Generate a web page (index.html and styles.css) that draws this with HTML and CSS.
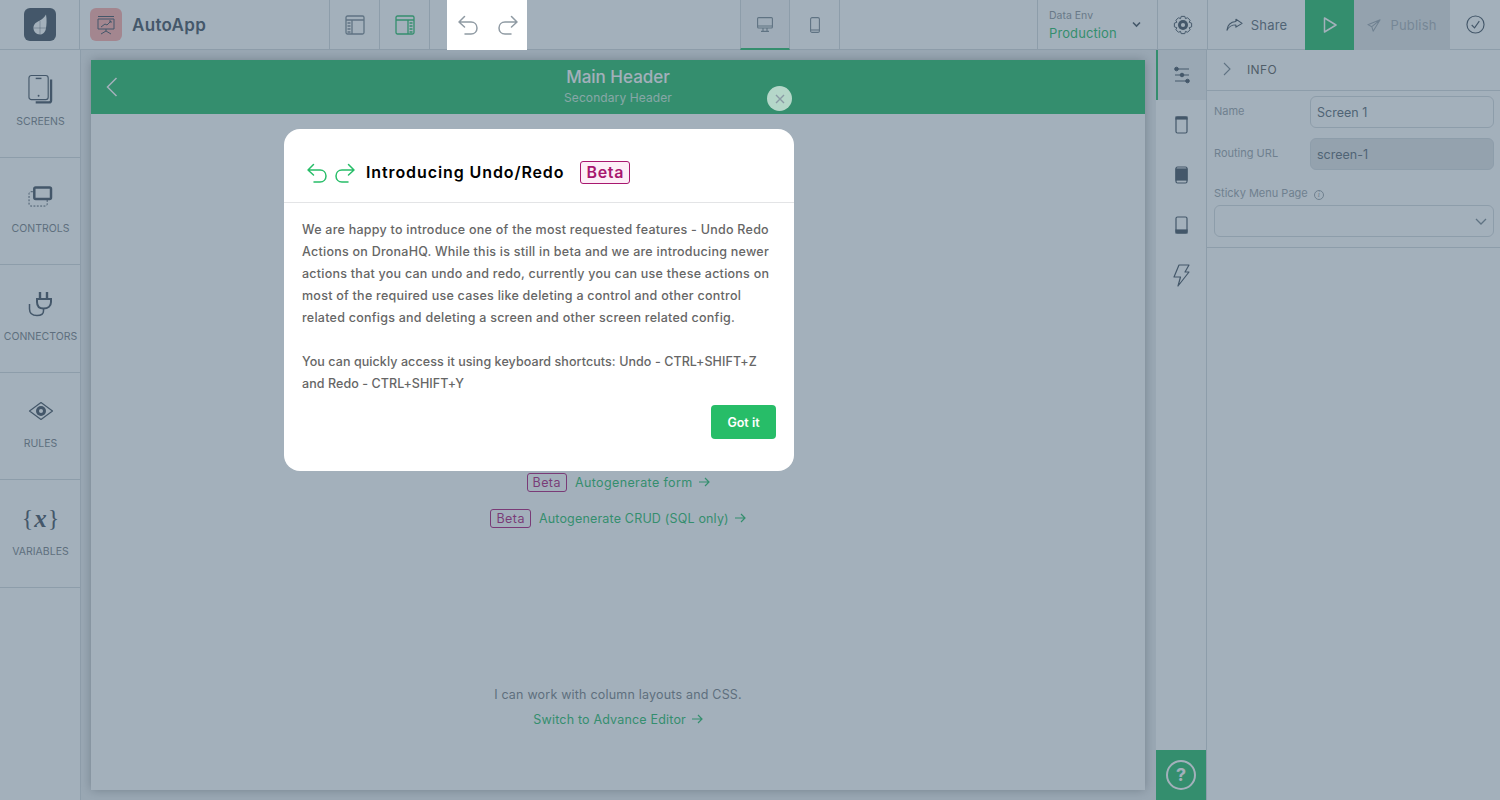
FILE: index.html
```html
<!DOCTYPE html>
<html lang="en">
<head>
    <meta charset="UTF-8">
    <title>AutoApp - Screen 1</title>
    <link rel="stylesheet" href="styles.css">
</head>
<body>
    <div id="app">
        <header class="topbar">
            <div class="cell logo-cell">
                <div class="logo">
                    <svg width="14" height="21" viewBox="0 0 14 21"><path d="M13 0.500 C14 6 13.500 11 13 14 C12.500 18 10 20.500 7 20.500 C3 20.500 0.500 17.500 0.500 14 C0.500 10 3 8.500 6 7 C9 5.500 11.500 3.500 13 0.500 Z" fill="#fff"/><path d="M7 7 V21 M1 14 H14" stroke="#455260" stroke-width=".8" stroke-opacity=".5"/></svg>
                </div>
            </div>
            <div class="cell app-cell">
                <div class="app-icon">
                    <svg width="22" height="22" viewBox="0 0 22 22" fill="none" stroke="#455260" stroke-width="1"><path d="M3 2.500 H19 M3 5 H19 V15 H3 Z M11 15 V17 M11 17 L6 20 M11 17 L16 20"/><path d="M6 13 L10 10 L12 11 L16 7 M14 7 H16 V9"/></svg>
                </div>
                <span class="app-name">AutoApp</span>
            </div>
            <div class="cell icon-cell">
                <svg width="20" height="20" viewBox="0 0 20 20" fill="none" stroke="#7b8791" stroke-width="1.300"><rect x="1" y="1" width="18" height="18" rx="1.500"/><path d="M1 5 H19 M7 5 V19 M2.500 8 H5.500 M2.500 11 H5.500 M2.500 14 H5.500 M2.500 17 H5.500"/></svg>
            </div>
            <div class="cell icon-cell">
                <svg width="20" height="20" viewBox="0 0 20 20" fill="none" stroke="#27bd68" stroke-width="1.300"><rect x="1" y="1" width="18" height="18" rx="1.500"/><path d="M1 5 H19 M13 5 V19 M14.500 8 H17.500 M14.500 11 H17.500 M14.500 14 H17.500 M14.500 17 H17.500"/></svg>
            </div>
            <div class="undo-box">
                <svg width="20" height="20" viewBox="0 0 20 20" fill="none" stroke="#8f9aa3" stroke-width="1.500" stroke-linecap="round" stroke-linejoin="round"><path d="M6.500 1.500 L1 7 L6.500 12 M1 7 H13 C16.500 7 19 9.500 19 13 C19 16.500 16.500 19 13 19 H7"/></svg>
                <svg width="20" height="20" viewBox="0 0 20 20" fill="none" stroke="#8f9aa3" stroke-width="1.500" stroke-linecap="round" stroke-linejoin="round"><path d="M13.500 1.500 L19 7 L13.500 12 M19 7 H7 C3.500 7 1 9.500 1 13 C1 16.500 3.500 19 7 19 H13"/></svg>
            </div>
            <div class="cell device-cell device-active">
                <svg width="16" height="15" viewBox="0 0 16 15" fill="none" stroke="#7b8791" stroke-width="1.100"><rect x=".6" y=".6" width="14.800" height="10.400" rx="1"/><path d="M.6 9 H15.400 M6 11 V14 M10 11 V14 M4 14.400 H12"/></svg>
            </div>
            <div class="cell device-cell">
                <svg width="10" height="16" viewBox="0 0 10 16" fill="none" stroke="#7b8791" stroke-width="1.100"><rect x=".6" y=".6" width="8.800" height="14.800" rx="1.500"/><path d="M.6 13 H9.400"/></svg>
            </div>
            <div class="spacer"></div>
            <div class="cell env-cell">
                <div class="env-text">
                    <div class="env-label">Data Env</div>
                    <div class="env-value">Production</div>
                </div>
                <svg width="9" height="7" viewBox="0 0 9 7" fill="none" stroke="#455260" stroke-width="1.600"><path d="M1 1.500 L4.500 5 L8 1.500"/></svg>
            </div>
            <div class="cell gear-cell">
                <svg width="20" height="20" viewBox="0 0 22 22" fill="none"><path d="M9 1.500 H13 L13.700 4 L16 3 L18.800 5.800 L17.800 8 L20.500 9 V13 L17.800 14 L18.800 16.200 L16 19 L13.700 18 L13 20.500 H9 L8.300 18 L6 19 L3.200 16.200 L4.200 14 L1.500 13 V9 L4.200 8 L3.200 5.800 L6 3 L8.300 4 Z" stroke="#455260" stroke-width="1.100" stroke-linejoin="round"/><circle cx="11" cy="11" r="5.500" fill="#455260"/><circle cx="11" cy="11" r="2.300" fill="#fff"/></svg>
            </div>
            <div class="cell share-cell">
                <svg width="17" height="13" viewBox="0 0 18 17" preserveAspectRatio="none" fill="none" stroke="#455260" stroke-width="1.200" stroke-linejoin="round"><path d="M10.500 1.500 L17 7 L10.500 12 V9 C6 9 3 11 1 16 C1.500 9 5 5 10.500 4.500 Z"/></svg>
                <span>Share</span>
            </div>
            <div class="cell play-cell">
                <svg width="14" height="16" viewBox="0 0 14 16" fill="none" stroke="#fff" stroke-width="1.500" stroke-linejoin="round"><path d="M1.500 1 L13 8 L1.500 15 Z"/></svg>
            </div>
            <div class="cell publish-cell">
                <svg width="14" height="13" viewBox="0 0 16 16" preserveAspectRatio="none" fill="none" stroke="#9aa4ad" stroke-width="1.200" stroke-linejoin="round"><path d="M15 1 L1 7 L5.500 9.500 L7 15 L15 1 Z M15 1 L5.500 9.500"/></svg>
                <span>Publish</span>
            </div>
            <div class="cell check-cell">
                <svg width="19" height="19" viewBox="0 0 20 20" fill="none" stroke="#455260" stroke-width="1.200"><circle cx="10" cy="10" r="9"/><path d="M6 10.500 L9 13.500 L14 6.500"/></svg>
            </div>
        </header>

        <div class="main">
            <nav class="sidebar">
                <div class="side-item">
                    <div class="side-icon">
                        <svg width="25" height="30" viewBox="0 0 26 30" fill="none"><path d="M24 5 V27 C24 28 23 29 22 29 H8" stroke="#455260" stroke-width="2.400"/><rect x="1" y="1" width="20" height="25" rx="2.500" fill="#fff" stroke="#455260" stroke-width="1.200"/><path d="M8 4 H14" stroke="#455260" stroke-width="1.500"/><circle cx="11" cy="22" r="1" fill="#455260"/></svg>
                    </div>
                    <span>SCREENS</span>
                </div>
                <div class="side-item">
                    <div class="side-icon">
                        <svg width="25" height="21" viewBox="0 0 26 22" fill="none"><rect x="1" y="6" width="19" height="15" rx="2" stroke="#455260" stroke-width="1" stroke-dasharray="2 1.500"/><rect x="6.500" y="1.500" width="17.500" height="12" rx="1.500" fill="#fff" stroke="#455260" stroke-width="2.600"/></svg>
                    </div>
                    <span>CONTROLS</span>
                </div>
                <div class="side-item">
                    <div class="side-icon">
                        <svg width="26" height="26" viewBox="0 0 26 26" fill="none" stroke="#455260"><path d="M12 1 V7 M19 1 V7" stroke-width="2.400"/><path d="M9 8 H23 V11 C23 15 20 17.500 15.500 17.500 C11 17.500 9 15 9 11 Z" stroke-width="2"/><path d="M15.500 18 V20 C15.500 23 13 24.500 9 24.500 C4 24.500 1.500 22 1.500 18 V13" stroke-width="1.500"/></svg>
                    </div>
                    <span>CONNECTORS</span>
                </div>
                <div class="side-item">
                    <div class="side-icon">
                        <svg width="26" height="20" viewBox="0 0 26 20" fill="none" stroke="#455260"><path d="M13 1.500 L24.500 10 L13 18.500 L1.500 10 Z" stroke-width="1.200" stroke-linejoin="round"/><circle cx="13" cy="10" r="5" fill="#455260" stroke="none"/><circle cx="13" cy="10" r="2" fill="#fff" stroke="none"/></svg>
                    </div>
                    <span>RULES</span>
                </div>
                <div class="side-item">
                    <div class="side-icon var-icon">{<i>x</i>}</div>
                    <span>VARIABLES</span>
                </div>
            </nav>

            <section class="canvas">
                <div class="screen">
                    <div class="screen-header">
                        <svg class="back-icon" width="12" height="20" viewBox="0 0 12 20" fill="none" stroke="#fff" stroke-width="1.500"><path d="M10.500 1 L1.500 10 L10.500 19"/></svg>
                        <div class="screen-title">Main Header</div>
                        <div class="screen-sub">Secondary Header</div>
                    </div>
                    <div class="screen-body">
                        <div class="gen-row">
                            <span class="beta">Beta</span>
                            <a class="gen-link">Autogenerate form
                                <svg width="11" height="10" viewBox="0 0 11 10" fill="none" stroke="#27bd68" stroke-width="1.200"><path d="M0 5 H10 M6 1 L10 5 L6 9"/></svg>
                            </a>
                        </div>
                        <div class="gen-row">
                            <span class="beta">Beta</span>
                            <a class="gen-link tight">Autogenerate CRUD (SQL only)
                                <svg width="11" height="10" viewBox="0 0 11 10" fill="none" stroke="#27bd68" stroke-width="1.200"><path d="M0 5 H10 M6 1 L10 5 L6 9"/></svg>
                            </a>
                        </div>
                        <p class="hint">I can work with column layouts and CSS.</p>
                        <a class="gen-link tight">Switch to Advance Editor
                            <svg width="11" height="10" viewBox="0 0 11 10" fill="none" stroke="#27bd68" stroke-width="1.200"><path d="M0 5 H10 M6 1 L10 5 L6 9"/></svg>
                        </a>
                    </div>
                </div>
            </section>

            <div class="rail">
                <div class="rail-item rail-active">
                    <svg width="16" height="18" viewBox="0 0 16 18" fill="none" stroke="#455260" stroke-width="1"><path d="M1 3 H15 M1 9 H15 M1 15 H15"/><circle cx="2.500" cy="3" r="1.800" fill="#455260"/><circle cx="8" cy="9" r="1.800" fill="#455260"/><circle cx="13.500" cy="15" r="1.800" fill="#455260"/></svg>
                </div>
                <div class="rail-item">
                    <svg width="13" height="18" viewBox="0 0 13 18" fill="none" stroke="#455260" stroke-width="1.200"><rect x="1" y="1" width="11" height="16" rx="1.500"/><rect x="1" y="1" width="11" height="2" fill="#455260"/></svg>
                </div>
                <div class="rail-item">
                    <svg width="13" height="18" viewBox="0 0 13 18" fill="none" stroke="#455260" stroke-width="1.200"><rect x="1" y="1" width="11" height="16" rx="1.500"/><rect x="1" y="3" width="11" height="11" fill="#455260"/></svg>
                </div>
                <div class="rail-item">
                    <svg width="13" height="18" viewBox="0 0 13 18" fill="none" stroke="#455260" stroke-width="1.200"><rect x="1" y="1" width="11" height="16" rx="1.500"/><rect x="1" y="14" width="11" height="3" fill="#455260"/></svg>
                </div>
                <div class="rail-item">
                    <svg width="17" height="23" viewBox="0 0 17 23" fill="none" stroke="#455260" stroke-width="1.200" stroke-linejoin="round"><path d="M6 1 H16 L12 8 H16 L5 22 L7.500 13 H1 Z"/></svg>
                </div>
                <div class="rail-spacer"></div>
                <div class="help">
                    <span>?</span>
                </div>
            </div>

            <aside class="panel">
                <div class="panel-head">
                    <svg width="8" height="14" viewBox="0 0 8 14" fill="none" stroke="#7b8791" stroke-width="1.100"><path d="M1 1 L7 7 L1 13"/></svg>
                    <span>INFO</span>
                </div>
                <div class="panel-body">
                    <div class="field">
                        <label>Name</label>
                        <div class="input">Screen 1</div>
                    </div>
                    <div class="field">
                        <label>Routing URL</label>
                        <div class="input input-off">screen-1</div>
                    </div>
                    <div class="sticky-label">Sticky Menu Page <span class="info-mark">i</span></div>
                    <div class="input select">
                        <svg width="12" height="7" viewBox="0 0 12 7" fill="none" stroke="#7b8791" stroke-width="1.300"><path d="M1 1 L6 6 L11 1"/></svg>
                    </div>
                </div>
            </aside>
        </div>

        <div class="overlay"></div>

        <button class="close-btn">
            <svg width="10" height="10" viewBox="0 0 10 10" stroke="#8a9aa5" stroke-width="1.400"><path d="M1 1 L9 9 M9 1 L1 9"/></svg>
        </button>

        <div class="modal">
            <div class="modal-head">
                <svg width="22" height="20" viewBox="0 0 20 20" fill="none" stroke="#27bd68" stroke-width="1.500" stroke-linecap="round" stroke-linejoin="round"><path d="M6.500 1.500 L1 7 L6.500 12 M1 7 H13 C16.500 7 19 9.500 19 13 C19 16.500 16.500 19 13 19 H7"/></svg>
                <svg width="22" height="20" viewBox="0 0 20 20" fill="none" stroke="#27bd68" stroke-width="1.500" stroke-linecap="round" stroke-linejoin="round"><path d="M13.500 1.500 L19 7 L13.500 12 M19 7 H7 C3.500 7 1 9.500 1 13 C1 16.500 3.500 19 7 19 H13"/></svg>
                <h3>Introducing Undo/Redo</h3>
                <span class="modal-beta">Beta</span>
            </div>
            <div class="modal-body">
                <p>We are happy to introduce one of the most requested features - Undo Redo<br>Actions on DronaHQ. While this is still in beta and we are introducing newer<br>actions that you can undo and redo, currently you can use these actions on<br>most of the required use cases like deleting a control and other control<br>related configs and deleting a screen and other screen related config.</p>
                <p class="last">You can quickly access it using keyboard shortcuts: Undo - CTRL+SHIFT+Z<br>and Redo - CTRL+SHIFT+Y</p>
                <div class="modal-foot">
                    <button class="got-it">Got it</button>
                </div>
            </div>
        </div>
    </div>
</body>
</html>
```

FILE: styles.css
```css
* {
    box-sizing: border-box;
}
body {
    margin: 0;
    font-family: "Inter", "Noto Sans", sans-serif;
    background: #fff;
    color: #455260;
    overflow: hidden;
}
#app {
    position: relative;
    width: 1500px;
    height: 800px;
    overflow: hidden;
}

/* top bar */
.topbar {
    display: flex;
    height: 50px;
    border-bottom: 1px solid #d5d9dd;
    background: #fff;
}
.cell {
    display: flex;
    align-items: center;
    justify-content: center;
    height: 49px;
    border-right: 1px solid #d5d9dd;
}
.spacer {
    flex: 1;
}
.logo-cell {
    width: 80px;
}
.logo {
    display: flex;
    align-items: center;
    justify-content: center;
    width: 32px;
    height: 33px;
    border-radius: 6px;
    background: #455260;
}
.app-cell {
    width: 250px;
    justify-content: flex-start;
    padding-left: 10px;
    gap: 10px;
}
.app-icon {
    display: flex;
    align-items: center;
    justify-content: center;
    width: 32px;
    height: 33px;
    border-radius: 6px;
    background: #ffacaa;
}
.app-name {
    font-size: 17px;
    font-weight: 600;
    letter-spacing: .3px;
}
.icon-cell {
    width: 50px;
}
.undo-box {
    position: relative;
    z-index: 20;
    display: flex;
    align-items: center;
    justify-content: center;
    gap: 20px;
    width: 80px;
    height: 50px;
    margin: 0 213px 0 17px;
    padding-left: 2px;
    background: #fff;
}
.device-cell {
    width: 50px;
    height: 50px;
}
.device-active {
    border-left: 1px solid #d5d9dd;
    border-bottom: 2px solid #27bd68;
    background: #f7f8f9;
}
.env-cell {
    width: 121px;
    padding: 0 16px 0 11px;
    justify-content: space-between;
    border-left: 1px solid #d5d9dd;
}
.env-label {
    font-size: 10.500px;
    color: #8d949b;
    margin-bottom: 3px;
}
.env-value {
    font-size: 13px;
    color: #27bd68;
    letter-spacing: .1px;
}
.gear-cell {
    width: 50px;
}
.share-cell,
.publish-cell {
    gap: 8px;
    font-size: 13px;
    letter-spacing: .2px;
}
.share-cell {
    width: 97px;
    border-right: 0;
    color: #5d6a76;
}
.play-cell {
    width: 49px;
    height: 50px;
    border-right: 0;
    background: #27bd68;
}
.publish-cell {
    width: 96px;
    height: 50px;
    gap: 9px;
    border-right: 0;
    background: #e2e4e6;
    color: #a8afb6;
}
.check-cell {
    width: 50px;
    border-right: 0;
}

/* main columns */
.main {
    display: flex;
    height: 750px;
}
.sidebar {
    width: 81px;
    border-right: 1px solid #d5d9dd;
    background: #fff;
}
.side-item {
    display: flex;
    flex-direction: column;
    align-items: center;
    justify-content: flex-end;
    gap: 11px;
    height: 107.500px;
    padding: 0 0 29px 1px;
    border-bottom: 1px solid #d5d9dd;
    font-size: 10.500px;
    line-height: 13px;
    color: #797f87;
    white-space: nowrap;
}
.side-icon {
    display: flex;
    align-items: center;
    justify-content: center;
    height: 30px;
}
.var-icon {
    font-family: "Liberation Serif", serif;
    font-size: 24px;
    color: #455260;
}
.var-icon i {
    font-weight: 700;
    font-size: 25px;
    padding: 0 1px;
}
.canvas {
    width: 1075px;
    padding: 10px 11px 10px 10px;
    background: #eceef0;
}
.screen {
    display: flex;
    flex-direction: column;
    height: 730px;
    background: #fff;
    box-shadow: 0 0 10px rgba(0, 0, 0, .3);
}
.screen-header {
    position: relative;
    height: 54px;
    padding-top: 7px;
    background: #27bd68;
    color: #fff;
    text-align: center;
}
.back-icon {
    position: absolute;
    left: 15px;
    top: 17px;
}
.screen-title {
    font-size: 17px;
    font-weight: 500;
    line-height: 20px;
}
.screen-sub {
    font-size: 12px;
    line-height: 21px;
    letter-spacing: .1px;
    color: #c9ecd8;
}
.screen-body {
    display: flex;
    flex-direction: column;
    align-items: center;
    padding-top: 358px;
}
.gen-row {
    display: flex;
    align-items: center;
    gap: 8px;
    height: 20px;
    margin-bottom: 16px;
    font-size: 12.500px;
}
.beta {
    padding: 0 5px;
    line-height: 17px;
    border: 1px solid #ae1b7b;
    border-radius: 3px;
    color: #ae1b7b;
    letter-spacing: .45px;
}
.gen-link {
    color: #27bd68;
    font-size: 12.500px;
    letter-spacing: .38px;
}
.gen-link svg {
    margin-left: 2px;
}
.gen-link.tight {
    letter-spacing: .18px;
}
.hint {
    margin: 143px 0 9px;
    font-size: 12.500px;
    line-height: 16px;
    color: #797f87;
    letter-spacing: .2px;
}

/* right rail */
.rail {
    display: flex;
    flex-direction: column;
    width: 51px;
    border-right: 1px solid #d5d9dd;
    background: #fff;
}
.rail-item {
    display: flex;
    align-items: center;
    justify-content: center;
    height: 50px;
}
.rail-active {
    border-left: 2px solid #27bd68;
    background: #eef0f2;
}
.rail-spacer {
    flex: 1;
}
.help {
    display: flex;
    align-items: center;
    justify-content: center;
    height: 50px;
    background: #27bd68;
}
.help span {
    display: block;
    width: 30px;
    height: 30px;
    border: 2px solid #fff;
    border-radius: 50%;
    color: #fff;
    font-size: 18px;
    font-weight: 700;
    line-height: 26px;
    text-align: center;
}

/* info panel */
.panel {
    width: 293px;
    background: #fff;
}
.panel-head {
    display: flex;
    align-items: center;
    gap: 16px;
    height: 41px;
    padding: 0 0 2px 16px;
    border-bottom: 1px solid #d5d9dd;
    font-size: 12px;
    color: #5d5d5d;
    letter-spacing: .4px;
}
.panel-body {
    padding: 5px 6px 10px 7px;
    border-bottom: 1px solid #d5d9dd;
}
.field {
    display: flex;
    margin-bottom: 10px;
}
.field label {
    width: 96px;
    padding-top: 8px;
    font-size: 11px;
    color: #9aa2a9;
}
.input {
    flex: 1;
    height: 32px;
    padding-left: 6px;
    border: 1px solid #d5d9dd;
    border-radius: 6px;
    font-size: 12.500px;
    line-height: 31px;
    color: #5d6a76;
}
.input-off {
    background: #e2e4e6;
}
.sticky-label {
    height: 25px;
    padding-top: 6px;
    font-size: 11px;
    color: #9aa2a9;
    line-height: 14px;
}
.info-mark {
    display: inline-block;
    width: 10px;
    height: 10px;
    margin-left: 3px;
    border: 1px solid #9aa2a9;
    border-radius: 50%;
    font-family: "Liberation Serif", serif;
    font-style: italic;
    font-size: 8px;
    line-height: 8px;
    text-align: center;
}
.select {
    display: flex;
    align-items: center;
    justify-content: flex-end;
    padding-right: 6px;
}

/* dimmed layer and dialog */
.overlay {
    position: absolute;
    inset: 0;
    z-index: 10;
    background: rgba(67, 94, 116, .49);
}
.close-btn {
    position: absolute;
    z-index: 20;
    left: 767px;
    top: 86px;
    display: flex;
    align-items: center;
    justify-content: center;
    width: 25px;
    height: 25px;
    padding: 0;
    border: 0;
    border-radius: 50%;
    background: #b5d7c9;
}
.modal {
    position: absolute;
    z-index: 20;
    left: 284px;
    top: 129px;
    width: 510px;
    height: 342px;
    border-radius: 16px;
    background: #fff;
}
.modal-head {
    display: flex;
    align-items: center;
    height: 74px;
    padding: 14px 0 0 22px;
    border-bottom: 1px solid #e3e4e6;
}
.modal-head svg + svg {
    margin-left: 6px;
}
.modal-head h3 {
    margin: -2px 16px 0 10px;
    font-size: 16px;
    font-weight: 600;
    color: #000;
    letter-spacing: .9px;
}
.modal-beta {
    margin-top: -1px;
    padding: 0 5px;
    border: 1px solid #a8176f;
    border-radius: 3px;
    background: #fdeef7;
    color: #a8176f;
    font-size: 16px;
    font-weight: 600;
    line-height: 21px;
    letter-spacing: .7px;
}
.modal-body {
    padding: 16px 18px 0;
    font-size: 12.500px;
    font-weight: 500;
    line-height: 22px;
    color: #666;
    letter-spacing: .25px;
}
.modal-body p {
    margin: 0 0 22px;
    white-space: nowrap;
}
.modal-body .last {
    margin-bottom: 10px;
    letter-spacing: .08px;
}
.modal-foot {
    display: flex;
    justify-content: flex-end;
}
.got-it {
    width: 65px;
    height: 34px;
    border: 0;
    border-radius: 4px;
    background: #27bd68;
    color: #fff;
    font-family: inherit;
    font-size: 12.500px;
    font-weight: 600;
}
```
